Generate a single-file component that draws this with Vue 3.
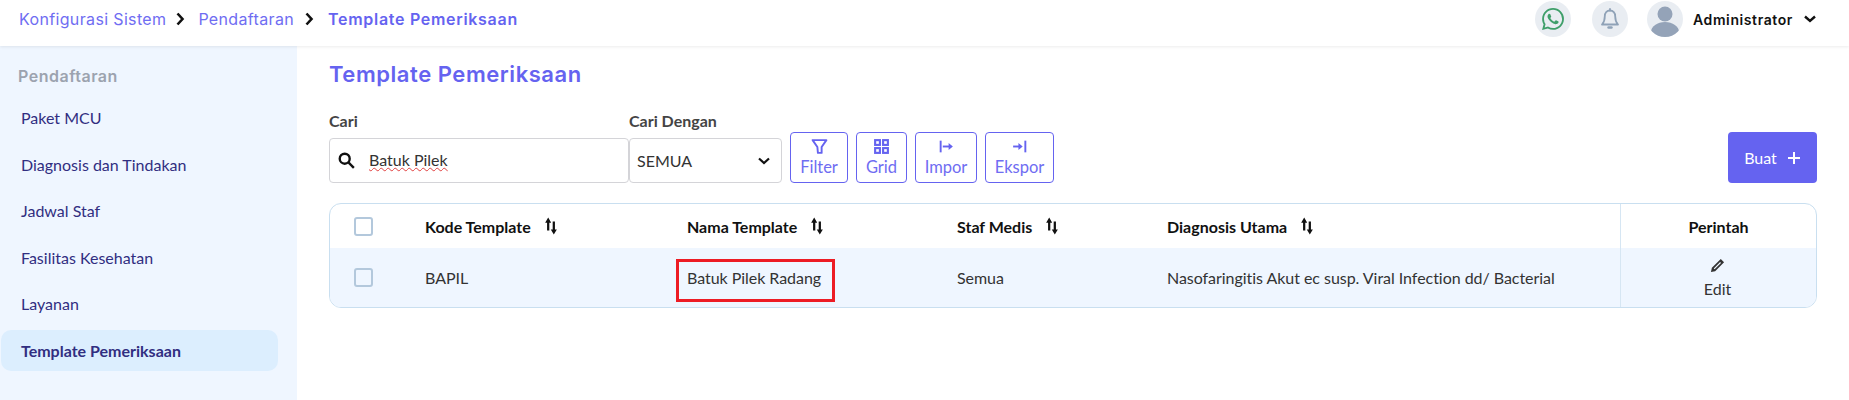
<template>
  <div class="page">
    <header class="topbar">
      <nav class="crumbs">
        <span>Konfigurasi Sistem</span>
        <svg class="crumb-sep" viewBox="0 0 10 14"><path d="M2.5 1.5 7.5 7l-5 5.500" /></svg>
        <span>Pendaftaran</span>
        <svg class="crumb-sep" viewBox="0 0 10 14"><path d="M2.5 1.5 7.5 7l-5 5.500" /></svg>
        <span class="crumb-current">Template Pemeriksaan</span>
      </nav>
      <div class="top-actions">
        <div class="round wa">
          <svg viewBox="0 0 24 24" width="22" height="22">
            <path
              fill="#3f9f6a"
              d="M17.472 14.382c-.297-.149-1.758-.867-2.03-.967-.273-.099-.471-.148-.67.15-.197.297-.767.966-.94 1.164-.173.199-.347.223-.644.075-.297-.15-1.255-.463-2.39-1.475-.883-.788-1.48-1.761-1.653-2.059-.173-.297-.018-.458.13-.606.134-.133.298-.347.446-.52.149-.174.198-.298.298-.497.099-.198.05-.371-.025-.52-.075-.149-.669-1.612-.916-2.207-.242-.579-.487-.5-.669-.51-.173-.008-.371-.01-.57-.01-.198 0-.52.074-.792.372-.272.297-1.04 1.016-1.04 2.479 0 1.462 1.065 2.875 1.213 3.074.149.198 2.096 3.2 5.077 4.487.709.306 1.262.489 1.694.625.712.227 1.36.195 1.871.118.571-.085 1.758-.719 2.006-1.413.248-.694.248-1.289.173-1.413-.074-.124-.272-.198-.57-.347m-5.421 7.403h-.004a9.87 9.87 0 01-5.031-1.378l-.361-.214-3.741.982.998-3.648-.235-.374a9.86 9.86 0 01-1.51-5.26c.001-5.45 4.436-9.884 9.888-9.884 2.64 0 5.122 1.03 6.988 2.898a9.825 9.825 0 012.893 6.994c-.003 5.45-4.437 9.884-9.885 9.884m8.413-18.297A11.815 11.815 0 0012.05 0C5.495 0 .16 5.335.157 11.892c0 2.096.547 4.142 1.588 5.945L.057 24l6.305-1.654a11.882 11.882 0 005.683 1.448h.005c6.554 0 11.89-5.335 11.893-11.893a11.821 11.821 0 00-3.48-8.413z"
            />
          </svg>
        </div>
        <div class="round bell">
          <svg viewBox="0 0 24 24" width="24" height="24" fill="none" stroke="#8fa2b7" stroke-width="1.8" stroke-linejoin="round">
            <path d="M12 3.500c-3.200 0-5.200 2.500-5.200 5.700 0 4.300-1.200 6.500-2.800 8.300h16c-1.600-1.800-2.800-4-2.800-8.300 0-3.200-2-5.700-5.200-5.700z" />
            <path d="M10.500 20.500h3" stroke-linecap="round" stroke-width="2.400" />
            <path d="M12 2v1.500" stroke-linecap="round" />
          </svg>
        </div>
        <div class="round avatar">
          <svg viewBox="0 0 36 36" width="36" height="36">
            <circle cx="18" cy="13" r="7.500" fill="#94a3b8" />
            <ellipse cx="18" cy="31" rx="14" ry="10" fill="#94a3b8" />
          </svg>
        </div>
        <span class="user-name">Administrator</span>
        <svg class="user-caret" viewBox="0 0 14 10"><path d="M2 2.500 7 7l5-4.500" /></svg>
      </div>
    </header>

    <div class="body">
      <aside class="sidebar">
        <div class="side-title">Pendaftaran</div>
        <a
          v-for="item in menu"
          :key="item"
          class="side-item"
          :class="{ active: item === 'Template Pemeriksaan' }"
        >{{ item }}</a>
      </aside>

      <main class="content">
        <h1 class="title">Template Pemeriksaan</h1>

        <div class="toolbar">
          <div class="field">
            <label>Cari</label>
            <div class="search">
              <svg viewBox="0 0 16 16" width="19" height="19" fill="none" stroke="#111" stroke-width="2">
                <circle cx="6.500" cy="6.500" r="4.200" />
                <path d="m9.800 9.800 4.400 4.400" />
              </svg>
              <span class="typed">Batuk Pilek</span>
            </div>
          </div>
          <div class="field">
            <label>Cari Dengan</label>
            <div class="select">
              <span>SEMUA</span>
              <svg viewBox="0 0 14 10" width="14" height="10" fill="none" stroke="#111" stroke-width="2.200"><path d="M2 2.500 7 7l5-4.500" /></svg>
            </div>
          </div>
          <div class="tools">
            <button class="tool t-filter">
              <svg viewBox="0 0 16 16" width="17" height="17" fill="none" stroke="#6563f0" stroke-width="1.800" stroke-linejoin="round"><path d="M1.500 2h13L10 8.500V14H6.500L6 8.500z" /></svg>
              Filter
            </button>
            <button class="tool t-grid">
              <svg viewBox="0 0 16 16" width="17" height="17" fill="none" stroke="#6563f0" stroke-width="2"><rect x="2" y="2" width="4.500" height="4.500" /><rect x="9.500" y="2" width="4.500" height="4.500" /><rect x="2" y="9.500" width="4.500" height="4.500" /><rect x="9.500" y="9.500" width="4.500" height="4.500" /></svg>
              Grid
            </button>
            <button class="tool t-impor">
              <svg viewBox="0 0 16 16" width="17" height="17" fill="none" stroke="#6563f0" stroke-width="1.800"><path d="M2.500 2.500v11" /><path d="M4.500 8H11" /><path fill="#6563f0" stroke="none" d="M10 4.800 14 8l-4 3.200z" /></svg>
              Impor
            </button>
            <button class="tool t-ekspor">
              <svg viewBox="0 0 16 16" width="17" height="17" fill="none" stroke="#6563f0" stroke-width="1.800"><path d="M13.500 2.500v11" /><path d="M2 8H8" /><path fill="#6563f0" stroke="none" d="M7 4.800 11 8l-4 3.200z" /></svg>
              Ekspor
            </button>
          </div>
          <button class="create">
            Buat
            <svg viewBox="0 0 14 14" width="14" height="14" stroke="#fff" stroke-width="2"><path d="M7 1v12M1 7h12" /></svg>
          </button>
        </div>

        <div class="table">
          <div class="row head">
            <div class="cell check"><span class="box"></span></div>
            <div v-for="col in columns" :key="col" class="cell">
              {{ col }}
              <svg class="sort" viewBox="0 0 12 16" width="14" height="18" fill="none" stroke="#111" stroke-width="2"><path d="M3.500 12V4M8.500 4v8" /><path fill="#111" stroke="none" d="M3.500 0.500 6.200 5H0.800zM8.500 15.500 5.800 11h5.400z" /></svg>
            </div>
            <div class="cell action">Perintah</div>
          </div>
          <div class="row data">
            <div class="cell check"><span class="box"></span></div>
            <div class="cell">BAPIL</div>
            <div class="cell marked"><span class="mark"></span>Batuk Pilek Radang</div>
            <div class="cell">Semua</div>
            <div class="cell">Nasofaringitis Akut ec susp. Viral Infection dd/ Bacterial</div>
            <div class="cell action edit">
              <svg viewBox="0 0 16 16" width="15" height="15"><path fill="#333" d="M11.500 1 15 4.500 5.500 14 1 15 2 10.500zM10.800 4.300 4 11.100l.9.9L11.700 5.200z" /></svg>
              <span>Edit</span>
            </div>
          </div>
        </div>
      </main>
    </div>
  </div>
</template>

<script setup>
const menu = [
  "Paket MCU",
  "Diagnosis dan Tindakan",
  "Jadwal Staf",
  "Fasilitas Kesehatan",
  "Layanan",
  "Template Pemeriksaan",
];

const columns = ["Kode Template", "Nama Template", "Staf Medis", "Diagnosis Utama"];
</script>

<style>
html,
body {
  margin: 0;
  background: #fff;
}
</style>

<style scoped>
.page {
  height: 400px;
  overflow: hidden;
  display: flex;
  flex-direction: column;
  font-family: Lato, "Liberation Sans", sans-serif;
  color: #333;
}

.topbar {
  height: 46px;
  flex: none;
  display: flex;
  align-items: center;
  justify-content: space-between;
  padding: 0 32px 8px 19px;
  box-sizing: border-box;
  background: #fff;
  box-shadow: 0 1px 3px rgba(0, 0, 0, 0.08);
  position: relative;
}

.crumbs {
  display: flex;
  align-items: center;
  font-family: Inter, sans-serif;
  font-size: 16px;
  letter-spacing: 0.35px;
  color: #6f6df2;
}

.crumb-sep {
  width: 10px;
  height: 14px;
  margin: 0 13px 0 9px;
  fill: none;
  stroke: #111;
  stroke-width: 2.6;
}

.crumb-sep + span + .crumb-sep {
  margin: 0 14px 0 10px;
}

.crumb-current {
  font-weight: 600;
  letter-spacing: 0.7px;
  color: #6563f0;
}

.top-actions {
  display: flex;
  align-items: center;
}

.round {
  width: 36px;
  height: 36px;
  border-radius: 50%;
  background: #e9edf2;
  display: flex;
  align-items: center;
  justify-content: center;
  overflow: hidden;
}

.wa {
  margin-right: 21px;
}

.bell {
  margin-right: 19px;
}

.avatar {
  margin-right: 10px;
}

.user-name {
  font-family: Inter, sans-serif;
  font-size: 14px;
  font-weight: 600;
  letter-spacing: 0.6px;
  color: #111;
}

.user-caret {
  width: 14px;
  height: 10px;
  margin-left: 10px;
  fill: none;
  stroke: #111;
  stroke-width: 2.4;
}

.body {
  flex: 1;
  display: flex;
  min-height: 0;
}

.sidebar {
  width: 297px;
  flex: none;
  box-sizing: border-box;
  background: #eff6ff;
  padding: 20px 19px 0 1px;
}

.side-title {
  font-family: Inter, sans-serif;
  font-size: 16px;
  font-weight: 600;
  letter-spacing: 0.5px;
  line-height: 20px;
  color: #9ca3af;
  margin: 0 0 11px 17px;
}

.side-item {
  display: flex;
  align-items: center;
  height: 41px;
  margin-bottom: 5.500px;
  padding-left: 20px;
  border-radius: 10px;
  font-size: 16px;
  color: #312e81;
}

.side-item.active {
  background: #dceefe;
  font-weight: 700;
}

.content {
  flex: 1;
  min-width: 0;
  padding: 15px 32px 0;
}

.title {
  margin: 0;
  font-family: Inter, sans-serif;
  font-size: 22px;
  font-weight: 600;
  letter-spacing: 0.55px;
  line-height: 26px;
  color: #6563f0;
}

.toolbar {
  display: flex;
  align-items: flex-end;
  margin-top: 24px;
}

.field label {
  display: block;
  font-size: 16px;
  font-weight: 700;
  line-height: 20px;
  margin-bottom: 7px;
  color: #444;
}

.search,
.select {
  height: 45px;
  box-sizing: border-box;
  border: 1px solid #d4d4d8;
  border-radius: 4px;
  display: flex;
  align-items: center;
  font-size: 16px;
}

.search {
  width: 300px;
  padding-left: 7px;
}

.typed {
  margin-left: 13px;
  position: relative;
  top: -1px;
  text-decoration: underline wavy #e04040 1px;
  text-underline-offset: 1px;
}

.select {
  width: 153px;
  justify-content: space-between;
  padding: 0 10px 0 7px;
}

.tools {
  display: flex;
  gap: 8px;
  margin-left: 8px;
}

.tool {
  height: 51px;
  padding: 0;
  box-sizing: border-box;
  background: #fff;
  border: 1px solid #6563f0;
  border-radius: 4px;
  display: flex;
  flex-direction: column;
  align-items: center;
  justify-content: center;
  gap: 2px;
  font-family: inherit;
  font-size: 16.500px;
  line-height: 20px;
  color: #6f6df2;
}

.t-filter {
  width: 58px;
}

.t-grid {
  width: 51px;
}

.t-impor {
  width: 62px;
}

.t-ekspor {
  width: 69px;
}

.create {
  margin-left: auto;
  width: 89px;
  height: 51px;
  border: 0;
  border-radius: 4px;
  background: #6563f0;
  color: #fff;
  display: flex;
  align-items: center;
  justify-content: center;
  gap: 10px;
  font-family: inherit;
  font-size: 16px;
}

.table {
  margin-top: 20px;
  border: 1px solid #c9dff0;
  border-radius: 12px;
  overflow: hidden;
}

.row {
  display: grid;
  grid-template-columns: 95px 262px 270px 210px 453px 1fr;
  align-items: stretch;
}

.head {
  height: 44px;
  font-weight: 700;
  font-size: 16px;
  color: #111;
}

.data {
  height: 59px;
  background: #eff6ff;
  font-size: 16px;
  letter-spacing: -0.04px;
  color: #333;
}

.cell {
  display: flex;
  align-items: center;
  position: relative;
}

.check {
  padding-left: 24px;
}

.box {
  width: 15px;
  height: 15px;
  border: 2px solid #b3c8dc;
  border-radius: 3px;
  background: #fff;
}

.data .box {
  background: #eff6ff;
}

.sort {
  margin-left: 13px;
}

.action {
  border-left: 1px solid #d6e6f3;
  justify-content: center;
}

.edit {
  flex-direction: column;
  gap: 7px;
  padding-right: 2px;
}

.edit span {
  line-height: 18px;
}

/* kotak merah penanda di atas sel */
.mark {
  position: absolute;
  left: -11px;
  top: 11px;
  width: 159px;
  height: 43px;
  box-sizing: border-box;
  border: 3px solid #ed1c24;
}
</style>
